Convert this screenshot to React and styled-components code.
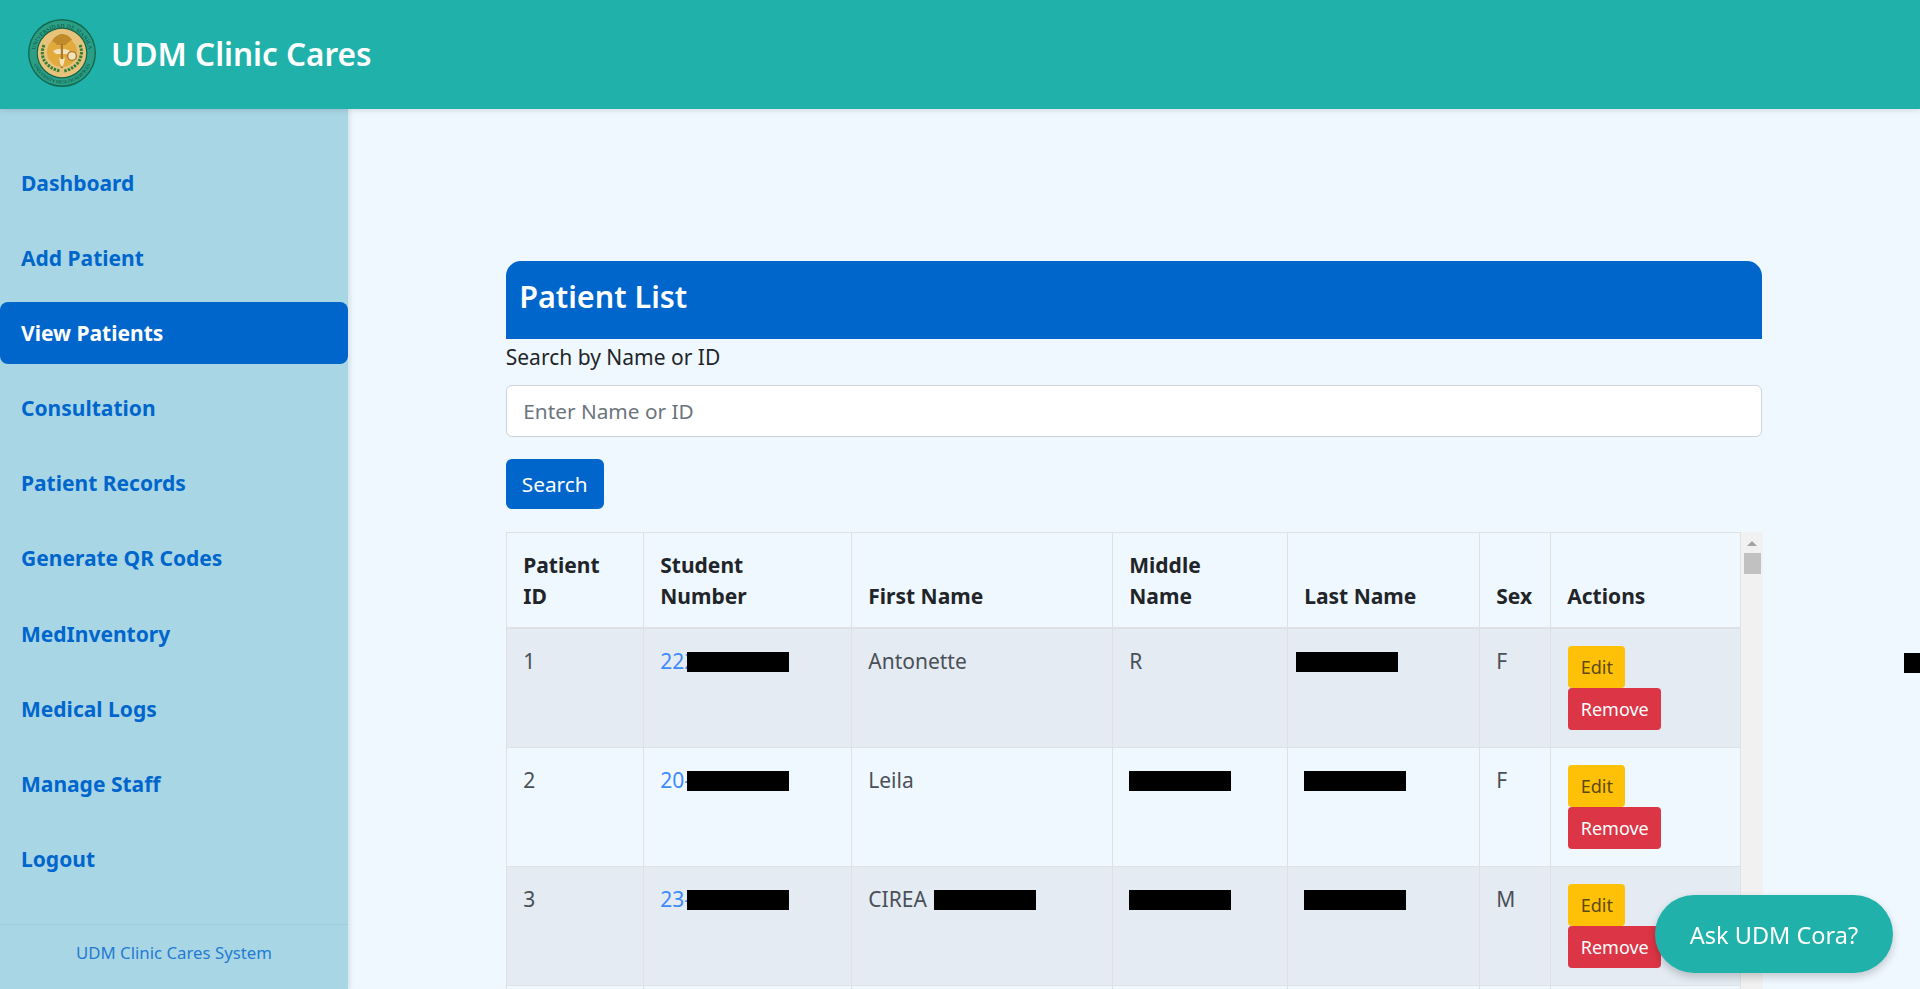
import React from 'react'
import styled, { createGlobalStyle } from 'styled-components'

const FONT = `"Noto Sans", "Open Sans", sans-serif`

const GlobalStyle = createGlobalStyle`
  html, body {
    margin: 0;
    height: 100%;
    overflow: hidden;
    background-color: #f0f8ff;
    font-family: ${FONT};
    color: #212529;
  }
  * { box-sizing: border-box; }
`

const navItems = ['Dashboard', 'Add Patient', 'View Patients', 'Consultation', 'Patient Records', 'Generate QR Codes', 'MedInventory', 'Medical Logs', 'Manage Staff', 'Logout']

const Seal = () => (
  <svg width="70" height="70" viewBox="0 0 70 70">
    <defs>
      <path id="sealTop" d="M7.5 37 A27.5 27.5 0 0 1 62.5 37" />
      <path id="sealBottom" d="M4.5 35 A30.5 30.5 0 0 0 65.5 35" />
    </defs>
    <circle cx="35" cy="35" r="34" fill="#12694f" />
    <circle cx="35" cy="35" r="32.6" fill="#2a9f86" />
    <circle cx="35" cy="35" r="25.4" fill="#156448" />
    <circle cx="35" cy="35" r="24.2" fill="#e6c27a" />
    <circle cx="35" cy="34" r="15" fill="#e2a93c" />
    <text fontSize="5.4" fontFamily="Liberation Serif, serif" fill="#0b4a37" letterSpacing=".35">
      <textPath href="#sealTop" startOffset="50%" textAnchor="middle">UNIVERSIDAD DE MANILA</textPath>
    </text>
    <text fontSize="4.8" fontFamily="Liberation Serif, serif" fill="#0b4a37">
      <textPath href="#sealBottom" startOffset="50%" textAnchor="middle">UNIVERSITY HEALTH SERVICES</textPath>
    </text>
    <path d="M25 23c3-5 7-7 10-7s8 2 10 6c-3 1-5 3-6 5h-9c-1-2-3-3-5-4z" fill="#c08a2a" />
    <path d="M26 33c5-3 12-3 17 0l-3 3H29z" fill="#f2e3bd" />
    <rect x="33.8" y="26" width="2.2" height="24" fill="#a97a2d" />
    <circle cx="45" cy="38" r="4.4" fill="#f2e3bd" stroke="#a97a2d" strokeWidth="1.4" />
    <path d="M17 27c-3 7-2 14 3 19 4 4 8 6 13 7" fill="none" stroke="#2f7f3a" strokeWidth="3" strokeDasharray="2.4 1.2" />
    <path d="M53 27c3 7 1 14-3 19-4 4-8 6-13 7" fill="none" stroke="#2f7f3a" strokeWidth="3" strokeDasharray="2.4 1.2" />
    <path d="M32 39c2 3 4 3 6 0-1 5-1 8-3 10-2-2-2-5-3-10z" fill="#f2e3bd" />
  </svg>
)

const ActionCell = () => (
  <td>
    <EditButton>Edit</EditButton>
    <RemoveButton>Remove</RemoveButton>
  </td>
)

const App = () => {
  return (
    <>
      <GlobalStyle />
      <Header>
        <Seal />
        <Brand>UDM Clinic Cares</Brand>
      </Header>
      <Body>
        <Sidebar>
          <Nav>
            {navItems.map(item => (
              <NavItem key={item} $active={item === 'View Patients'}>{item}</NavItem>
            ))}
          </Nav>
          <SideFooter>UDM Clinic Cares System</SideFooter>
        </Sidebar>
        <Main>
          <Card>
            <CardTitle>Patient List</CardTitle>
            <Label htmlFor="search">Search by Name or ID</Label>
            <SearchInput id="search" placeholder="Enter Name or ID" />
            <SearchButton>Search</SearchButton>
            <TableWrap>
              <Table>
                <colgroup>
                  <col width="137" />
                  <col width="208" />
                  <col width="261" />
                  <col width="175" />
                  <col width="192" />
                  <col width="71" />
                  <col width="190.5" />
                </colgroup>
                <thead>
                  <tr>
                    <th>Patient<br />ID</th>
                    <th>Student<br />Number</th>
                    <th>First Name</th>
                    <th>Middle<br />Name</th>
                    <th>Last Name</th>
                    <th>Sex</th>
                    <th>Actions</th>
                  </tr>
                </thead>
                <tbody>
                  <tr>
                    <td>1</td>
                    <td><StudentLink>222</StudentLink><Redact $shift={-9} /></td>
                    <td>Antonette</td>
                    <td>R</td>
                    <td><Redact $shift={-8} /></td>
                    <td>F</td>
                    <ActionCell />
                  </tr>
                  <tr>
                    <td>2</td>
                    <td><StudentLink>20-</StudentLink><Redact $shift={-4} /></td>
                    <td>Leila</td>
                    <td><Redact /></td>
                    <td><Redact /></td>
                    <td>F</td>
                    <ActionCell />
                  </tr>
                  <tr>
                    <td>3</td>
                    <td><StudentLink>23-</StudentLink><Redact $shift={-4} /></td>
                    <td>CIREA <Redact $shift={2} /></td>
                    <td><Redact /></td>
                    <td><Redact /></td>
                    <td>M</td>
                    <ActionCell />
                  </tr>
                  <tr>
                    <td /><td /><td /><td /><td /><td /><td />
                  </tr>
                </tbody>
              </Table>
              <ScrollTrack>
                <ScrollArrow />
                <ScrollThumb />
              </ScrollTrack>
            </TableWrap>
          </Card>
          <StrayRedact />
        </Main>
      </Body>
      <AskButton>Ask UDM Cora?</AskButton>
    </>
  )
}

export default App

const Header = styled.header`
  position: relative;
  z-index: 2;
  display: flex;
  align-items: center;
  gap: 14px;
  height: 109px;
  padding: 0 0 3px 27px;
  background-color: #20b2aa;
  box-shadow: 0 2px 5px rgba(0, 0, 0, 0.1);
`
const Brand = styled.h1`
  margin: 0;
  font-size: 31.5px;
  font-weight: 600;
  color: #fff;
`
const Body = styled.div`
  display: flex;
  height: 880px;
`
const Sidebar = styled.aside`
  position: relative;
  z-index: 1;
  display: flex;
  flex-direction: column;
  justify-content: space-between;
  flex: 0 0 348px;
  padding-top: 43px;
  background-color: #a9d6e5;
  box-shadow: 2px 0 5px rgba(0, 0, 0, 0.1);
`
const Nav = styled.nav`
  display: flex;
  flex-direction: column;
  gap: 13.1px;
`
const NavItem = styled.a`
  display: flex;
  align-items: center;
  height: 62px;
  padding-left: 21px;
  border-radius: 8px;
  font-size: 21px;
  font-weight: 700;
  color: ${({ $active }) => ($active ? '#fff' : '#0066cc')};
  background-color: ${({ $active }) => ($active ? '#0066cc' : 'transparent')};
`
const SideFooter = styled.div`
  height: 65px;
  padding-top: 16px;
  border-top: 1px solid rgba(0, 0, 0, 0.05);
  text-align: center;
  font-size: 16.8px;
  color: #0066cc;
  opacity: 0.8;
`
const Main = styled.main`
  position: relative;
  flex: 1;
  padding-top: 152px;
  overflow: hidden;
`
const Card = styled.section`
  width: 1256.5px;
  margin: 0 auto;
`
const CardTitle = styled.h2`
  display: flex;
  align-items: center;
  height: 78px;
  margin: 0;
  padding: 0 0 8px 13.5px;
  border-radius: 15px 15px 0 0;
  font-size: 30.5px;
  font-weight: 600;
  color: #fff;
  background-color: #0066cc;
`
const Label = styled.label`
  display: block;
  margin: 3px 0 13px;
  font-size: 21px;
  line-height: 30px;
`
const SearchInput = styled.input`
  display: block;
  width: 100%;
  height: 52px;
  padding: 0 16.5px;
  border: 1px solid #ced4da;
  border-radius: 6px;
  font-family: ${FONT};
  font-size: 20.8px;
  background-color: #fff;

  &::placeholder {
    color: #6c757d;
  }
`
const SearchButton = styled.button`
  display: block;
  height: 50px;
  margin: 22px 0 23px;
  padding: 0 16px;
  border: 0;
  border-radius: 6px;
  font-family: ${FONT};
  font-size: 20.8px;
  color: #fff;
  background-color: #0066cc;
`
const TableWrap = styled.div`
  display: flex;
  align-items: stretch;
  height: 600px;
`
const Table = styled.table`
  width: 1234.5px;
  flex: none;
  align-self: flex-start;
  table-layout: fixed;
  border-collapse: collapse;
  font-size: 21px;
  line-height: 30px;

  th, td {
    padding: 17px 17px 16px 16.5px;
    border: 1px solid #dee2e6;
    text-align: left;
  }
  th {
    vertical-align: bottom;
    line-height: 30.6px;
    font-weight: 700;
    color: #212529;
    border-bottom-width: 2px;
  }
  td {
    height: 119px;
    vertical-align: top;
    line-height: 31px;
    color: #495057;
  }
  tbody tr:nth-child(odd) td {
    background-color: #e4ebf3;
  }
`
const StudentLink = styled.a`
  color: #3d8bfd;
`
const Redact = styled.span`
  display: inline-block;
  width: 102px;
  height: 20px;
  margin-left: ${({ $shift }) => $shift || 0}px;
  vertical-align: -3px;
  background-color: #000;
`
const StrayRedact = styled.span`
  position: absolute;
  top: 544px;
  right: 0;
  width: 16px;
  height: 20px;
  background-color: #000;
`
const ActionButton = styled.button`
  display: block;
  height: 42px;
  margin-left: 1px;
  padding: 0 12.5px;
  border: 0;
  border-radius: 4px;
  font-family: ${FONT};
  font-size: 18px;
`
const EditButton = styled(ActionButton)`
  color: #5c4a10;
  background-color: #ffc107;
`
const RemoveButton = styled(ActionButton)`
  color: #fff;
  background-color: #dc3545;
`
const ScrollTrack = styled.div`
  position: relative;
  flex: 0 0 22px;
  display: flex;
  flex-direction: column;
  align-items: center;
  background-color: #f1f1f1;
`
const ScrollArrow = styled.span`
  margin-top: 9px;
  border-left: 5px solid transparent;
  border-right: 5px solid transparent;
  border-bottom: 5px solid #a3a3a3;
`
const ScrollThumb = styled.span`
  width: 17px;
  height: 21px;
  margin-top: 7px;
  background-color: #c1c1c1;
`
const AskButton = styled.button`
  position: fixed;
  right: 27px;
  bottom: 16px;
  z-index: 5;
  width: 238px;
  height: 78px;
  padding-top: 2px;
  border: 0;
  border-radius: 39px;
  font-family: ${FONT};
  font-size: 23.5px;
  color: #fff;
  background-color: #20b2aa;
  box-shadow: 0 4px 8px rgba(0, 0, 0, 0.2);
`
